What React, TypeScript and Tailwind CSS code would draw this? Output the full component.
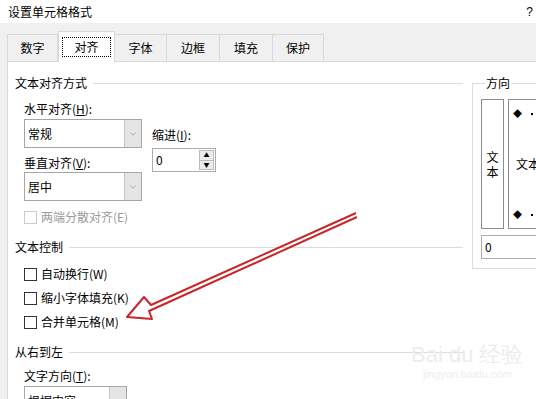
import { ChevronDown } from 'lucide-react';

const FONT = '"Noto Sans CJK SC", "Microsoft YaHei", sans-serif';

function SectionHeader({ label }: { label: string }) {
  return (
    <div className="flex h-[14px] items-center gap-[6px] pl-[7px]">
      <span className="leading-[14px]">{label}</span>
      <div className="h-px flex-1 bg-[#dcdcdc]" />
    </div>
  );
}

function Combo({ value, width }: { value: string; width: number }) {
  return (
    <div
      className="flex h-[29px] border border-[#a6a6a6] bg-white"
      style={{ width }}
    >
      <div className="flex flex-1 items-center pl-[3px]">{value}</div>
      <div className="flex w-[17px] items-center justify-center border-l border-[#c6c6c6] bg-[#e5e5e5]">
        <ChevronDown size={10} strokeWidth={1.2} className="text-[#606060]" />
      </div>
    </div>
  );
}

function CheckRow({ label, disabled }: { label: string; disabled?: boolean }) {
  return (
    <div className="flex h-[14px] items-center gap-[4px] pl-[16px]">
      <div
        className={
          disabled
            ? 'h-[13px] w-[13px] border border-[#cccccc] bg-white'
            : 'h-[13px] w-[13px] border border-[#333333] bg-white'
        }
      />
      <span className={disabled ? 'text-[#9a9a9a]' : ''}>{label}</span>
    </div>
  );
}

function Spin({ width }: { width: number }) {
  return (
    <div
      className="flex h-[24px] border border-[#acacac] bg-white"
      style={{ width }}
    >
      <div className="flex flex-1 items-center pl-[3px]">0</div>
      <div className="m-[1px] flex w-[15px] flex-col">
        <div className="flex flex-1 items-center justify-center border border-[#bcbcbc] bg-[#ececec] text-[6px] leading-none">
          ▲
        </div>
        <div className="flex flex-1 items-center justify-center border border-t-0 border-[#bcbcbc] bg-[#ececec] text-[6px] leading-none">
          ▼
        </div>
      </div>
    </div>
  );
}

function DotRow() {
  return (
    <div className="flex items-center gap-[9px]">
      <span className="text-[9px] leading-none">◆</span>
      <div className="h-[2px] w-[2px] bg-black" />
    </div>
  );
}

const tabs = [
  { label: '数字', w: 51 },
  { label: '对齐', w: 57, active: true },
  { label: '字体', w: 53 },
  { label: '边框', w: 54 },
  { label: '填充', w: 54 },
  { label: '保护', w: 52 },
];

export default function App() {
  return (
    <div
      className="relative h-[399px] w-[536px] overflow-hidden bg-[#f0f0f0] text-[12px] text-black"
      style={{ fontFamily: FONT }}
    >
      {/* Title bar */}
      <div className="flex h-[23px] items-center justify-between bg-white pl-[8px] pr-[3px]">
        <span className="text-[12px]">设置单元格格式</span>
        <span className="font-['Liberation_Sans'] text-[12px]">?</span>
      </div>

      {/* Tabs */}
      <div className="flex h-[38px] items-end pl-[7px]">
        {tabs.map((t) =>
          t.active ? (
            <div
              key={t.label}
              className="relative z-10 -mb-px flex h-[31px] items-center justify-center border border-b-0 border-[#d9d9d9] bg-white"
              style={{ width: t.w }}
            >
              <span className="border border-dotted border-black px-[11px] leading-[18px]">
                {t.label}
              </span>
            </div>
          ) : (
            <div
              key={t.label}
              className="-ml-px flex h-[27px] items-center justify-center border border-b-0 border-[#d9d9d9] first:ml-0"
              style={{ width: t.w }}
            >
              {t.label}
            </div>
          )
        )}
      </div>

      {/* Pane */}
      <div className="ml-[7px] flex h-[400px] border-l border-t border-[#d9d9d9] bg-white pt-[14px]">
        <div className="w-[455px] shrink-0">
          <SectionHeader label="文本对齐方式" />

          <div className="mt-[12px] flex gap-[10px] pl-[16px]">
            <div className="flex w-[118px] flex-col">
              <div className="leading-[14px]">水平对齐(<u>H</u>):</div>
              <div className="mt-[3px]">
                <Combo value="常规" width={118} />
              </div>
              <div className="mt-[8px] leading-[14px]">垂直对齐(<u>V</u>):</div>
              <div className="mt-[2px]">
                <Combo value="居中" width={118} />
              </div>
            </div>
            <div className="flex flex-col pt-[26px]">
              <div className="leading-[14px]">缩进(<u>I</u>):</div>
              <div className="mt-[6px]">
                <Spin width={64} />
              </div>
            </div>
          </div>

          <div className="mt-[9px]">
            <CheckRow label="两端分散对齐(E)" disabled />
          </div>

          <div className="mt-[16px]">
            <SectionHeader label="文本控制" />
          </div>

          <div className="mt-[13px] flex flex-col gap-[10px]">
            <CheckRow label="自动换行(W)" />
            <CheckRow label="缩小字体填充(K)" />
            <CheckRow label="合并单元格(M)" />
          </div>

          <div className="mt-[16px]">
            <SectionHeader label="从右到左" />
          </div>

          <div className="mt-[10px] pl-[16px] leading-[14px]">
            文字方向(<u>T</u>):
          </div>
          <div className="mt-[3px] pl-[16px]">
            <Combo value="根据内容" width={103} />
          </div>
        </div>

        {/* Orientation group */}
        <fieldset className="ml-[9px] h-[193px] w-[90px] shrink-0 border border-[#dcdcdc] pl-[8px]">
          <legend className="ml-[4px] px-[1px] leading-[14px]">方向</legend>
          <div className="mt-[9px] flex gap-[4px]">
            <div className="flex h-[130px] w-[23px] flex-col items-center justify-center border border-[#8c8c8c]">
              <span className="leading-[15px]">文</span>
              <span className="leading-[15px]">本</span>
            </div>
            <div className="flex h-[130px] w-[60px] flex-col justify-between border border-[#8c8c8c] py-[9px] pl-[4px]">
              <DotRow />
              <div className="pl-[3px] leading-[14px]">文本</div>
              <DotRow />
            </div>
          </div>
          <div className="mt-[6px]">
            <Spin width={80} />
          </div>
        </fieldset>
      </div>

      {/* Red annotation arrow */}
      <svg
        className="pointer-events-none absolute left-0 top-0"
        width="536"
        height="399"
        viewBox="0 0 536 399"
      >
        <path
          d="M356 213 L151 305 L144 297 L127 317 L152 319 L149 311 L357 217"
          fill="none"
          stroke="#c9262a"
          strokeWidth="2"
          strokeLinejoin="round"
        />
      </svg>

      {/* Watermark */}
      <div className="pointer-events-none absolute left-[411px] top-[343px] flex flex-col items-center text-[#ededed]">
        <div className="font-['Liberation_Sans'] text-[22px] leading-[24px]">
          Bai du 经验
        </div>
        <div className="font-['Liberation_Sans'] text-[11px] leading-[14px]">
          jingyan.baidu.com
        </div>
      </div>
    </div>
  );
}
